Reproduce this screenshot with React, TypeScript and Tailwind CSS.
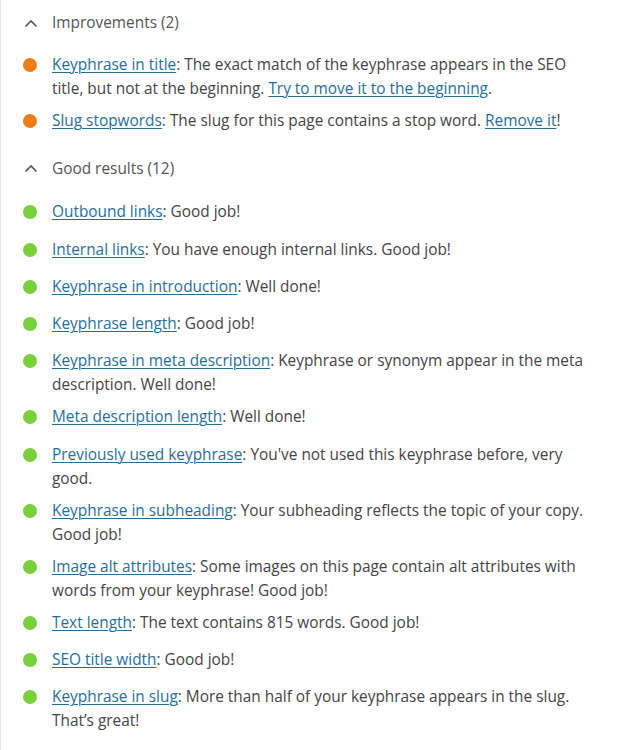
import React from 'react';

type Part = { text: string; link?: boolean };
type Result = { parts: Part[] };

const improvements: Result[] = [
  {
    parts: [
      { text: 'Keyphrase in title', link: true },
      { text: ': The exact match of the keyphrase appears in the SEO title, but not at the beginning. ' },
      { text: 'Try to move it to the beginning', link: true },
      { text: '.' },
    ],
  },
  {
    parts: [
      { text: 'Slug stopwords', link: true },
      { text: ': The slug for this page contains a stop word. ' },
      { text: 'Remove it', link: true },
      { text: '!' },
    ],
  },
];

const good: Result[] = [
  { parts: [{ text: 'Outbound links', link: true }, { text: ': Good job!' }] },
  { parts: [{ text: 'Internal links', link: true }, { text: ': You have enough internal links. Good job!' }] },
  { parts: [{ text: 'Keyphrase in introduction', link: true }, { text: ': Well done!' }] },
  { parts: [{ text: 'Keyphrase length', link: true }, { text: ': Good job!' }] },
  {
    parts: [
      { text: 'Keyphrase in meta description', link: true },
      { text: ': Keyphrase or synonym appear in the meta description. Well done!' },
    ],
  },
  { parts: [{ text: 'Meta description length', link: true }, { text: ': Well done!' }] },
  {
    parts: [
      { text: 'Previously used keyphrase', link: true },
      { text: ": You've not used this keyphrase before, very good." },
    ],
  },
  {
    parts: [
      { text: 'Keyphrase in subheading', link: true },
      { text: ': Your subheading reflects the topic of your copy. Good job!' },
    ],
  },
  {
    parts: [
      { text: 'Image alt attributes', link: true },
      { text: ': Some images on this page contain alt attributes with words from your keyphrase! Good job!' },
    ],
  },
  { parts: [{ text: 'Text length', link: true }, { text: ': The text contains 815 words. Good job!' }] },
  { parts: [{ text: 'SEO title width', link: true }, { text: ': Good job!' }] },
  {
    parts: [
      { text: 'Keyphrase in slug', link: true },
      { text: ': More than half of your keyphrase appears in the slug. That\u2019s great!' },
    ],
  },
];

const Chevron = () => (
  <svg width="14" height="9" viewBox="0 0 14 9" className="flex-shrink-0">
    <path d="M1.5 7.5 L7 2 L12.5 7.5" fill="none" stroke="#555" strokeWidth="1.6" />
  </svg>
);

const Section = ({ title, items, dot, listGap }: { title: string; items: Result[]; dot: string; listGap: string }) => (
  <div>
    <div className="flex items-center h-[24px] text-[#555]">
      <div className="w-[51px] pl-[23px] flex items-center">
        <Chevron />
      </div>
      <span>{title}</span>
    </div>
    <ul className={listGap}>
      {items.map((item, i) => (
        <li key={i} className="flex min-h-[29.3px] mb-[8px]">
          <div className="w-[51px] flex-shrink-0 pl-[22px] pt-[5px]">
            <span className={`block w-[14px] h-[14px] rounded-full ${dot}`} />
          </div>
          <p className="w-[536px] leading-[24px]">
            {item.parts.map((p, j) =>
              p.link ? (
                <a key={j} href="#" className="text-[#1f6f9a] underline underline-offset-[2px] decoration-1">
                  {p.text}
                </a>
              ) : (
                <span key={j}>{p.text}</span>
              )
            )}
          </p>
        </li>
      ))}
    </ul>
  </div>
);

export default function App() {
  return (
    <div
      className="min-h-[750px] w-[621px] bg-white border-l border-[#e5e5e5] pt-[11px] text-[15.4px] text-[#444]"
      style={{ fontFamily: '"Open Sans", "Noto Sans", sans-serif' }}
    >
      <Section title="Improvements (2)" items={improvements} dot="bg-[#ee7c1b]" listGap="mt-[18px]" />
      <div className="mt-[18px]">
        <Section title="Good results (12)" items={good} dot="bg-[#7ad03a]" listGap="mt-[20px]" />
      </div>
    </div>
  );
}
